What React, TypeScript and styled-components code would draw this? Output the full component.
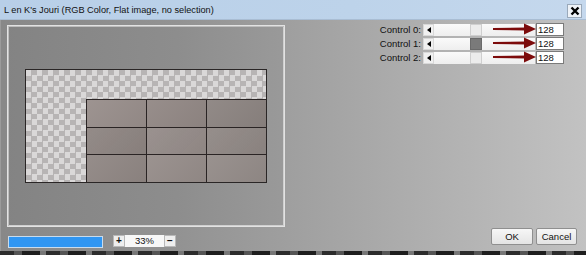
import React from "react";
import styled, { createGlobalStyle } from "styled-components";

const GlobalStyle = createGlobalStyle`
  html, body {
    margin: 0;
    padding: 0;
    background: #3a3a3a;
  }
  body {
    font-family: "Liberation Sans", Arial, sans-serif;
  }
`;

const controls = [
  { label: "Control 0:", value: 128, dark: false },
  { label: "Control 1:", value: 128, dark: true },
  { label: "Control 2:", value: 128, dark: false },
];

const cellColors = [
  "#978d8a",
  "#918784",
  "#8b8380",
  "#8d8481",
  "#948b88",
  "#8f8784",
  "#8f8683",
  "#958c89",
  "#938b88",
];

const RedArrow: React.FC = () => (
  <ArrowSvg width="44" height="12" viewBox="0 0 44 12">
    <path d="M0 5 L33 4.5 L33 7.5 L0 7 Z" fill="#7c0b0b" />
    <path d="M31 0.5 L43 6 L31 11.5 Z" fill="#7c0b0b" />
  </ArrowSvg>
);

const App: React.FC = () => {
  return (
    <>
      <GlobalStyle />
      <Window>
        <TitleBar>
          <Title>L en K's Jouri (RGB Color, Flat image, no selection)</Title>
          <CloseButton>
            <svg width="10" height="10" viewBox="0 0 10 10">
              <path d="M1.5 1.5 L8.5 8.5 M8.5 1.5 L1.5 8.5" stroke="#000" strokeWidth="2.4" />
            </svg>
          </CloseButton>
        </TitleBar>
        <Body>
          <LeftColumn>
            <PreviewFrame>
              <ImageBox>
                <CellGrid>
                  {cellColors.map((c, idx) => (
                    <Cell key={idx} $color={c} />
                  ))}
                </CellGrid>
              </ImageBox>
            </PreviewFrame>
            <ZoomRow>
              <ProgressBar />
              <ZoomControls>
                <SmallButton>+</SmallButton>
                <ZoomValue>33%</ZoomValue>
                <SmallButton>−</SmallButton>
              </ZoomControls>
            </ZoomRow>
          </LeftColumn>
          <RightColumn>
            <ControlList>
              {controls.map((ctl) => (
                <ControlRow key={ctl.label}>
                  <ControlLabel>{ctl.label}</ControlLabel>
                  <SliderGroup>
                    <ScrollBar>
                      <ArrowButton>
                        <svg width="4" height="6" viewBox="0 0 4 6">
                          <path d="M4 0 L0 3 L4 6 Z" fill="#000" />
                        </svg>
                      </ArrowButton>
                      <Track>
                        <Thumb $dark={ctl.dark} />
                      </Track>
                    </ScrollBar>
                    <ValueBox>{ctl.value}</ValueBox>
                    <RedArrow />
                  </SliderGroup>
                </ControlRow>
              ))}
            </ControlList>
            <ButtonRow>
              <DialogButton $width={42}>OK</DialogButton>
              <DialogButton $width={41}>Cancel</DialogButton>
            </ButtonRow>
          </RightColumn>
        </Body>
        <BottomStrip />
      </Window>
    </>
  );
};

const Window = styled.div`
  width: 586px;
  height: 255px;
  display: flex;
  flex-direction: column;
  overflow: hidden;
`;

const TitleBar = styled.div`
  height: 20px;
  flex: none;
  display: flex;
  align-items: center;
  justify-content: space-between;
  padding: 0 4px 0 4px;
  box-sizing: border-box;
  background: linear-gradient(90deg, #b8cfe8 0%, #bdd3ea 60%, #c5d8ed 100%);
  border-bottom: 1px solid #a9bdd3;
`;

const Title = styled.span`
  font-size: 9.2px;
  color: #111;
`;

const CloseButton = styled.div`
  width: 15px;
  height: 14px;
  display: flex;
  align-items: center;
  justify-content: center;
  background: #eef2f7;
  border: 1px solid #9aa9ba;
  box-sizing: border-box;
  margin-top: 2px;
`;

const Body = styled.div`
  flex: 1;
  display: flex;
  padding: 3px 8px 0 6px;
  background: linear-gradient(90deg, #888888 0%, #929292 30%, #a3a3a3 55%, #b4b4b4 80%, #c2c2c2 100%);
  border-left: 1px solid #9a9a9a;
`;

const LeftColumn = styled.div`
  width: 278px;
  display: flex;
  flex-direction: column;
  gap: 6px;
  padding-top: 2px;
`;

const PreviewFrame = styled.div`
  height: 202px;
  box-sizing: border-box;
  border: 1px solid #e2e2e2;
  box-shadow: inset 1px 1px 0 #bdbdbd, inset -1px -1px 0 #cfcfcf;
  display: flex;
  align-items: center;
  justify-content: center;
  background: rgba(0, 0, 0, 0.03);
`;

const ImageBox = styled.div`
  width: 242px;
  height: 114px;
  box-sizing: border-box;
  border: 1px solid #2a2626;
  display: grid;
  grid-template-columns: 60px 1fr;
  grid-template-rows: 29px 1fr;
  background: repeating-conic-gradient(#b7b4b4 0 25%, #dad8d8 0 50%) 0 0 / 11px 11px;
`;

const CellGrid = styled.div`
  grid-column: 2;
  grid-row: 2;
  display: grid;
  grid-template-columns: repeat(3, 1fr);
  grid-template-rows: repeat(3, 1fr);
  gap: 1px;
  background: #2a2424;
  border-left: 1px solid #2a2424;
  border-top: 1px solid #2a2424;
`;

const Cell = styled.div<{ $color: string }>`
  background: linear-gradient(135deg, rgba(255, 255, 255, 0.06), rgba(0, 0, 0, 0.04)), ${(p) => p.$color};
`;

const ZoomRow = styled.div`
  height: 15px;
  display: flex;
  align-items: center;
  gap: 10px;
  padding-left: 1px;
`;

const ProgressBar = styled.div`
  width: 95px;
  height: 12px;
  box-sizing: border-box;
  background: #3096f2;
  border: 1px solid #c8dcee;
  margin-top: 3px;
`;

const ZoomControls = styled.div`
  display: flex;
  align-items: center;
`;

const SmallButton = styled.div`
  width: 12px;
  height: 12px;
  box-sizing: border-box;
  display: flex;
  align-items: center;
  justify-content: center;
  background: #eeeeee;
  border: 1px solid #b8b8b8;
  font-size: 10px;
  font-weight: bold;
  color: #111;
  line-height: 1;
`;

const ZoomValue = styled.div`
  width: 39px;
  height: 12px;
  box-sizing: border-box;
  display: flex;
  align-items: center;
  justify-content: center;
  background: #f7f7f7;
  font-size: 9.5px;
  color: #111;
`;

const RightColumn = styled.div`
  flex: 1;
  display: flex;
  flex-direction: column;
  justify-content: space-between;
  padding: 0 0 6px 0;
`;

const ControlList = styled.div`
  display: flex;
  flex-direction: column;
  gap: 1px;
`;

const ControlRow = styled.div`
  height: 13px;
  display: flex;
  align-items: center;
  justify-content: flex-end;
  padding-right: 14px;
`;

const ControlLabel = styled.span`
  font-size: 9.5px;
  color: #111;
  margin-right: 2px;
`;

const SliderGroup = styled.div`
  position: relative;
  display: flex;
  align-items: center;
  gap: 1px;
`;

const ScrollBar = styled.div`
  width: 112px;
  height: 12px;
  display: flex;
  background: #f2f2f2;
`;

const ArrowButton = styled.div`
  width: 11px;
  height: 12px;
  box-sizing: border-box;
  display: flex;
  align-items: center;
  justify-content: center;
  background: #f0f0f0;
  border: 1px solid #d8d8d8;
`;

const Track = styled.div`
  flex: 1;
  display: flex;
  padding-left: 36px;
  background: linear-gradient(180deg, #fafafa, #eeeeee);
`;

const Thumb = styled.div<{ $dark: boolean }>`
  width: 12px;
  height: 12px;
  box-sizing: border-box;
  background: ${(p) => (p.$dark ? "#7a7a7a" : "#ececec")};
  border: 1px solid ${(p) => (p.$dark ? "#6a6a6a" : "#cfcfcf")};
`;

const ValueBox = styled.div`
  width: 28px;
  height: 13px;
  box-sizing: border-box;
  background: #ffffff;
  border: 1px solid #7a7a7a;
  font-size: 9.5px;
  color: #111;
  padding-left: 1px;
  line-height: 11px;
`;

const ArrowSvg = styled.svg`
  position: absolute;
  left: 70px;
  top: 0px;
`;

const ButtonRow = styled.div`
  display: flex;
  justify-content: flex-end;
  gap: 3px;
  padding-right: 1px;
`;

const DialogButton = styled.div<{ $width: number }>`
  width: ${(p) => p.$width}px;
  height: 17px;
  box-sizing: border-box;
  display: flex;
  align-items: center;
  justify-content: center;
  background: linear-gradient(180deg, #f6f6f6, #e4e4e4);
  border: 1px solid #8f8f8f;
  border-radius: 2px;
  font-size: 9.5px;
  color: #111;
`;

const BottomStrip = styled.div`
  height: 4px;
  flex: none;
  background: repeating-linear-gradient(90deg, #2c2c2c 0 14px, #555 14px 22px, #1e1e1e 22px 40px, #777 40px 46px);
`;

export default App;
